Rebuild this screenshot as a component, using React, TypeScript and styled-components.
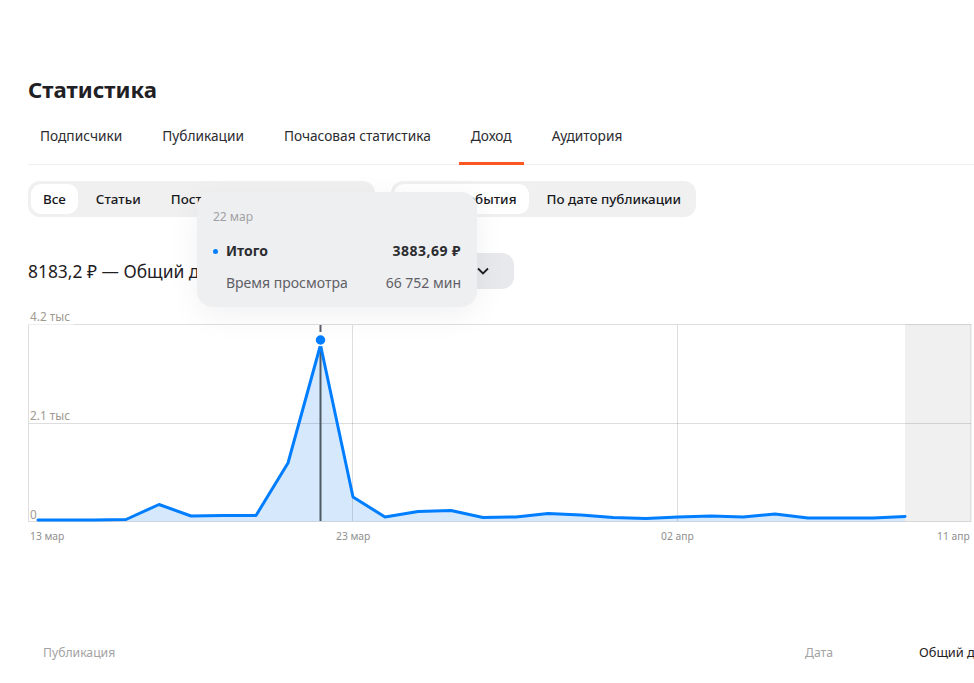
import styled, { createGlobalStyle } from 'styled-components';

const GlobalStyle = createGlobalStyle`
  html, body {
    margin: 0;
    height: 100%;
    overflow: hidden;
    background: #fff;
  }
  body {
    font-family: "Noto Sans", "Open Sans", Arial, sans-serif;
    color: #1f2024;
  }
`;

const tabs = ['Подписчики', 'Публикации', 'Почасовая статистика', 'Доход', 'Аудитория'];
const types = ['Все', 'Статьи', 'Посты', 'Видео', 'Ролики'];
const dates = ['По дате события', 'По дате публикации'];

const points: [number, number][] = [
  [38, 520], [61, 520], [93, 520], [126, 519.5], [159, 504.5], [191, 516], [223, 515.5],
  [256, 515.5], [288, 463], [320.5, 345], [353, 497], [385, 517], [418, 511.5], [451, 510.5],
  [483, 517.5], [516, 517], [548, 513.5], [581, 515], [613, 517.5], [646, 518.5], [678, 517],
  [711, 516], [743, 517], [775, 514], [808, 518], [840, 518], [873, 518], [905, 516.5],
];

const line = points.map(([x, y]) => `${x - 28},${y - 310}`).join(' ');
const area = `10,211.5 ${line} 877,211.5`;

function Chart() {
  return (
    <ChartSvg width="946" height="250" viewBox="0 -10 946 250">
      <rect x="877" y="14" width="66" height="197.5" fill="#f0f0f0" />
      <polygon points={area} fill="#d6e9fc" />
      <g stroke="#000" strokeOpacity="0.13" strokeWidth="1" fill="none">
        <rect x="0.5" y="14.5" width="942.5" height="197" />
        <path d="M1 113.5H943M324.5 15V211M649.5 15V211" />
      </g>
      <path d="M292.5 15V22" stroke="#5a6068" strokeWidth="2" />
      <path d="M292.5 36V211" stroke="#4f5a65" strokeWidth="2" />
      <polyline points={line} fill="none" stroke="#007eff" strokeWidth="3" strokeLinejoin="round" strokeLinecap="round" />
      <circle cx="292.5" cy="30" r="5.5" fill="#007eff" stroke="#fff" strokeWidth="1.5" />
      <rect x="0" y="0" width="46" height="14.5" fill="#fff" />
      <ScaleText x="2" y="11">4.2 тыс</ScaleText>
      <ScaleText x="2" y="110">2.1 тыс</ScaleText>
      <ScaleText x="2" y="209">0</ScaleText>
      <AxisText x="2" y="230">13 мар</AxisText>
      <AxisText x="308" y="230">23 мар</AxisText>
      <AxisText x="633" y="230">02 апр</AxisText>
      <AxisText x="909" y="230">11 апр</AxisText>
    </ChartSvg>
  );
}

function App() {
  return (
    <>
      <GlobalStyle />
      <Page>
        <Title>Статистика</Title>
        <Tabs>
          {tabs.map((tab) => (
            <Tab key={tab} $active={tab === 'Доход'}>{tab}</Tab>
          ))}
        </Tabs>
        <Filters>
          <Segment>
            {types.map((item) => (
              <SegmentItem key={item} $active={item === 'Все'}>{item}</SegmentItem>
            ))}
          </Segment>
          <Segment>
            {dates.map((item) => (
              <SegmentItem key={item} $active={item === dates[0]}>{item}</SegmentItem>
            ))}
          </Segment>
        </Filters>
        <Summary>
          <Total>8183,2 ₽ — Общий доход</Total>
          <Select>
            <svg width="14" height="14" viewBox="0 0 14 14" fill="none">
              <path d="M2 4.5L7 9.5L12 4.5" stroke="#1f2024" strokeWidth="1.8" />
            </svg>
          </Select>
        </Summary>
        <Chart />
        <TableHead>
          <PublicationCol>Публикация</PublicationCol>
          <DateCol>Дата</DateCol>
          <IncomeCol>Общий доход</IncomeCol>
        </TableHead>
        <Tooltip>
          <TooltipDate>22 мар</TooltipDate>
          <TooltipRow $bold>
            <span><Bullet />Итого</span>
            <TooltipValue>3883,69 ₽</TooltipValue>
          </TooltipRow>
          <TooltipRow>
            <span>Время просмотра</span>
            <span>66 752 мин</span>
          </TooltipRow>
        </Tooltip>
      </Page>
    </>
  );
}

const Page = styled.div`
  position: relative;
  width: 974px;
  height: 683px;
  overflow: hidden;
  padding: 74px 0 0 28px;
  box-sizing: border-box;
`;

const Title = styled.h1`
  margin: 0;
  font-size: 22.2px;
  line-height: 32px;
  font-weight: 700;
  color: #1f2024;
`;

const Tabs = styled.div`
  display: flex;
  gap: 16px;
  height: 59px;
  box-sizing: border-box;
  border-bottom: 1px solid #eeeeee;
`;

const Tab = styled.div<{ $active?: boolean }>`
  padding: 20px 12px 0;
  font-size: 13.7px;
  line-height: 20px;
  color: #2b2c30;
  box-sizing: border-box;
  height: 59px;
  border-bottom: 3px solid ${({ $active }) => ($active ? '#ff5722' : 'transparent')};
`;

const Filters = styled.div`
  display: flex;
  gap: 16px;
  margin-top: 16px;
`;

const Segment = styled.div`
  display: flex;
  gap: 6px;
  padding: 3px;
  border-radius: 12px;
  background: #f0f0f1;
  &:first-child {
    width: 341px;
  }
`;

const SegmentItem = styled.div<{ $active?: boolean }>`
  padding: 0 12px;
  height: 30px;
  line-height: 30px;
  border-radius: 10px;
  font-size: 13.4px;
  font-weight: 500;
  white-space: nowrap;
  color: #17181c;
  background: ${({ $active }) => ($active ? '#fff' : 'transparent')};
`;

const Summary = styled.div`
  display: flex;
  align-items: center;
  justify-content: space-between;
  width: 486px;
  height: 36px;
  margin-top: 36px;
`;

const Total = styled.div`
  font-size: 17.4px;
  color: #1f2024;
  white-space: nowrap;
`;

const Select = styled.div`
  display: flex;
  align-items: center;
  justify-content: flex-end;
  width: 120px;
  height: 36px;
  padding-right: 24px;
  box-sizing: border-box;
  border-radius: 12px;
  background: #e8e9ec;
`;

const ChartSvg = styled.svg`
  display: block;
  margin-top: 11px;
`;

const AxisText = styled.text`
  font-family: "Noto Sans", Arial, sans-serif;
  font-size: 10.3px;
  fill: #8f8f8f;
`;

const ScaleText = styled(AxisText)`
  font-size: 11.8px;
  fill: #a09a90;
`;

const TableHead = styled.div`
  display: flex;
  align-items: center;
  margin-top: 92px;
  height: 20px;
  font-size: 12.2px;
  white-space: nowrap;
`;

const PublicationCol = styled.div`
  flex: none;
  width: 762px;
  padding-left: 15px;
  box-sizing: border-box;
  color: #a3a3a3;
`;

const DateCol = styled.div`
  flex: none;
  width: 129px;
  padding-left: 15px;
  box-sizing: border-box;
  color: #a3a3a3;
`;

const IncomeCol = styled.div`
  flex: none;
  font-size: 12.8px;
  color: #1f2024;
`;

const Tooltip = styled.div`
  position: absolute;
  left: 197px;
  top: 192px;
  width: 280px;
  height: 115px;
  box-sizing: border-box;
  padding: 17px 16px 0;
  border-radius: 16px;
  background: #eeeff1;
  box-shadow: 0 8px 32px rgba(0, 0, 0, 0.06);
`;

const TooltipDate = styled.div`
  font-size: 12px;
  line-height: 16px;
  color: #a0a1a5;
  margin-bottom: 17px;
`;

const TooltipRow = styled.div<{ $bold?: boolean }>`
  display: flex;
  justify-content: space-between;
  height: 32px;
  padding-left: ${({ $bold }) => ($bold ? '0' : '13px')};
  font-size: 14px;
  line-height: 18px;
  font-weight: ${({ $bold }) => ($bold ? 700 : 400)};
  color: ${({ $bold }) => ($bold ? '#2b2c30' : '#5f6066')};
`;

const TooltipValue = styled.span`
  letter-spacing: 0.5px;
`;

const Bullet = styled.i`
  display: inline-block;
  width: 5px;
  height: 5px;
  margin-right: 8px;
  border-radius: 50%;
  background: #007eff;
  vertical-align: 2px;
`;

export default App;
